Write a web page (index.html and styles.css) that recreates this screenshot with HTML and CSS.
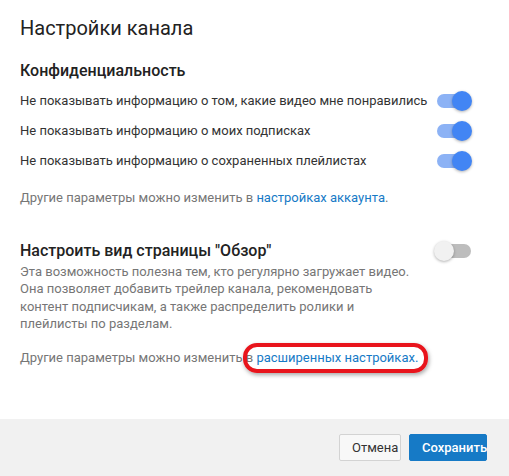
FILE: index.html
```html
<!DOCTYPE html>
<html lang="ru">
<head>
<meta charset="utf-8">
<title>Настройки канала</title>
<link rel="stylesheet" href="styles.css">
</head>
<body>
<div class="dialog">
  <div class="content">
    <h1 class="title">Настройки канала</h1>

    <h2 class="section-title privacy-title">Конфиденциальность</h2>
    <div class="rows">
      <div class="row">
        <span class="row-text">Не показывать информацию о том, какие видео мне понравились</span>
        <span class="toggle on"><span class="track"></span><span class="knob"></span></span>
      </div>
      <div class="row">
        <span class="row-text">Не показывать информацию о моих подписках</span>
        <span class="toggle on"><span class="track"></span><span class="knob"></span></span>
      </div>
      <div class="row">
        <span class="row-text">Не показывать информацию о сохраненных плейлистах</span>
        <span class="toggle on"><span class="track"></span><span class="knob"></span></span>
      </div>
    </div>
    <p class="note note-first">Другие параметры можно изменить в <a class="link" href="#">настройках аккаунта</a>.</p>

    <div class="section-head">
      <h2 class="section-title">Настроить вид страницы "Обзор"</h2>
      <span class="toggle off"><span class="track"></span><span class="knob"></span></span>
    </div>
    <p class="desc">Эта возможность полезна тем, кто регулярно загружает видео. Она позволяет добавить трейлер канала, рекомендовать контент подписчикам, а также распределить ролики и плейлисты по разделам.</p>
    <p class="note note-second">Другие параметры можно изменить в <a class="link highlighted" href="#">расширенных настройках.</a></p>
  </div>
  <div class="footer">
    <button class="btn btn-cancel">Отмена</button>
    <button class="btn btn-save">Сохранить</button>
  </div>
</div>
</body>
</html>
```

FILE: styles.css
```css
html, body {
  margin: 0;
  padding: 0;
  background: #ffffff;
}

body {
  font-family: Roboto, "Liberation Sans", Arial, sans-serif;
  color: #333333;
  width: 509px;
  height: 476px;
  overflow: hidden;
}

.dialog {
  display: flex;
  flex-direction: column;
  height: 476px;
}

.content {
  flex: 1;
  padding: 16px 37px 0 20px;
}

.title {
  margin: 0;
  font-size: 20px;
  line-height: 24px;
  font-weight: 400;
  color: #222222;
}

.section-title {
  margin: 0;
  font-size: 16px;
  line-height: 20px;
  font-weight: 500;
  color: #222222;
}

.privacy-title {
  margin-top: 21px;
}

.rows {
  margin-top: 5px;
}

.row {
  display: flex;
  align-items: center;
  justify-content: space-between;
  height: 30px;
}

.row-text {
  font-size: 13px;
  line-height: 16px;
  color: #333333;
}

.toggle {
  position: relative;
  flex: none;
  width: 38px;
  height: 20px;
}

.track {
  position: absolute;
  left: 3px;
  top: 3px;
  width: 34px;
  height: 14px;
  border-radius: 7px;
}

.knob {
  position: absolute;
  top: 0;
  width: 20px;
  height: 20px;
  border-radius: 50%;
  box-shadow: 0 1px 3px rgba(0, 0, 0, 0.3);
}

.toggle.on .track {
  background: #8cb2f5;
}

.toggle.on .knob {
  left: 18px;
  background: #4285f4;
}

.toggle.off .track {
  background: #bdbdbd;
}

.toggle.off .knob {
  left: 0;
  background: #f1f1f1;
}

.note {
  margin: 0;
  font-size: 13px;
  line-height: 16px;
  color: #767676;
}

.note-first {
  margin-top: 14px;
}

.link {
  color: #167ac6;
  text-decoration: none;
}

.section-head {
  display: flex;
  align-items: center;
  justify-content: space-between;
  margin-top: 34px;
  height: 22px;
}

.desc {
  margin: 1px 0 0;
  font-size: 13px;
  line-height: 17.3px;
  color: #767676;
  width: 394px;
}

.note-second {
  margin-top: 18px;
}

.highlighted {
  position: relative;
}

.highlighted::after {
  content: "";
  position: absolute;
  left: -13px;
  right: -10px;
  top: -7px;
  bottom: -8px;
  border: 4px solid #e8141c;
  border-radius: 14px;
  box-shadow: 1px 2px 4px rgba(0, 0, 0, 0.35);
}

.footer {
  flex: none;
  height: 57px;
  box-sizing: border-box;
  background: #f1f1f1;
  display: flex;
  align-items: center;
  justify-content: flex-end;
  gap: 8px;
  padding: 0 22px 1px 0;
}

.btn {
  font-family: Roboto, "Liberation Sans", Arial, sans-serif;
  font-size: 13px;
  height: 27px;
  padding: 0 12px;
  border-radius: 2px;
  cursor: pointer;
}

.btn-cancel {
  background: #f8f8f8;
  border: 1px solid #d3d3d3;
  color: #333333;
  font-weight: 400;
  width: 62px;
}

.btn-save {
  background: #167ac6;
  border: 1px solid #167ac6;
  color: #ffffff;
  font-weight: 500;
  width: 78px;
}
```
